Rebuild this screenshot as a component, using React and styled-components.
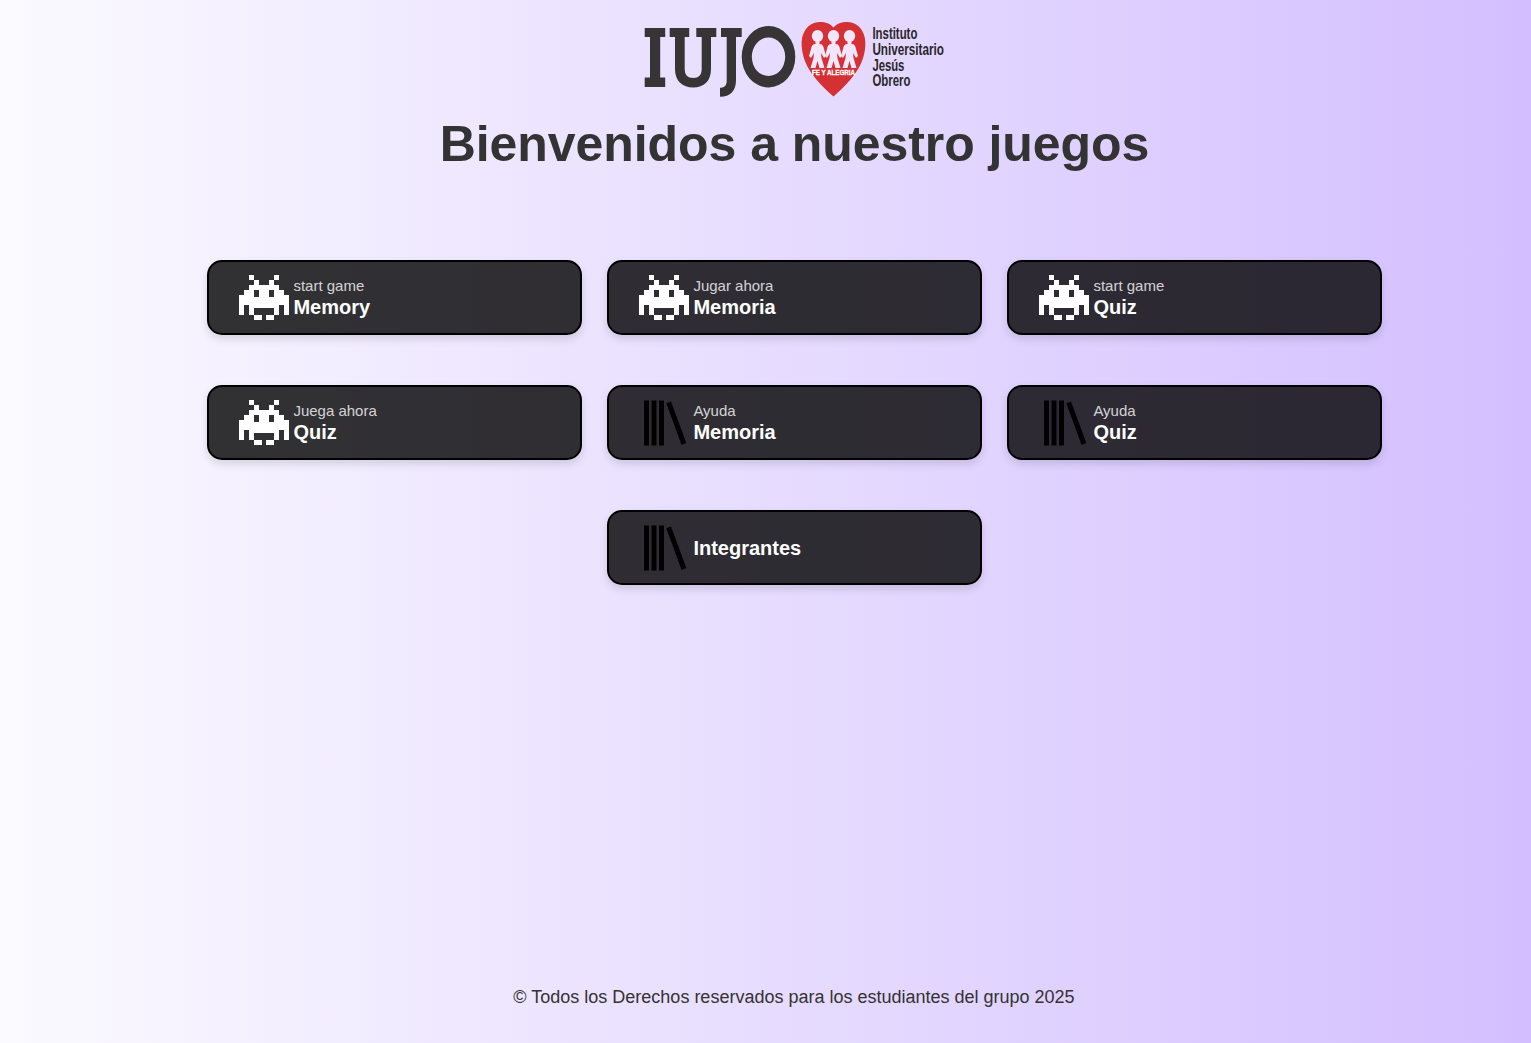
import React from 'react';
import styled, { createGlobalStyle } from 'styled-components';

const GlobalStyle = createGlobalStyle`
  * { box-sizing: border-box; }
  body { margin: 0; font-family: "Liberation Sans", Arial, sans-serif; }
`;

const Page = styled.div`
  min-height: 1043px;
  display: flex;
  flex-direction: column;
  align-items: center;
  padding: 21px 0 35px 58px;
  background: linear-gradient(to right, #fbfaff, #d3bfff);
`;

const Logo = styled.svg`
  display: block;
  width: 305px;
  height: 77px;
  flex: none;
  overflow: visible;
`;

const Title = styled.h1`
  margin: 18px 0 0;
  font-size: 50px;
  line-height: 57px;
  letter-spacing: -0.06px;
  color: #333;
  white-space: nowrap;
`;

const Menu = styled.nav`
  width: 1175px;
  margin-top: 87px;
  display: flex;
  flex-wrap: wrap;
  justify-content: center;
  gap: 50px 25px;
`;

const Card = styled.a`
  width: 375px;
  height: 75px;
  padding-left: 30px;
  display: flex;
  align-items: center;
  gap: 4.4px;
  color: #fff;
  background: rgba(0, 0, 0, 0.8);
  border: 2px solid #000;
  border-radius: 15px;
  box-shadow: 0 4px 8px rgba(0, 0, 0, 0.13);
`;

const Icon = styled.svg`
  width: 50px;
  height: 50px;
  flex: none;
`;

const Label = styled.div`
  display: flex;
  flex-direction: column;
  padding-top: 1px;
`;

const Small = styled.span`
  font-size: 15px;
  line-height: 17px;
  margin: 0 0 2px;
  color: rgba(255, 255, 255, 0.8);
`;

const Name = styled.span`
  font-size: 20px;
  line-height: 23px;
  font-weight: 700;
`;

const Footer = styled.footer`
  margin-top: auto;
  padding-right: 1px;
  font-size: 18px;
  line-height: 21px;
  color: #333;
`;

const Invader = () => (
  <Icon viewBox="0 0 50 50" shapeRendering="crispEdges" fill="#fff">
    <path
      fillRule="evenodd"
      d="M10 12h5v-5h5v5h10v-5h5v5h5v5h5v5h5v20h-5v-10h-5v10h-5v-7h-20v7h-5v-10h-5v10h-5v-20h5v-5h5zM15 17v7h5v-7zM30 17v7h5v-7z"
    />
    <path d="M10 2h5v5h-5zM35 2h5v5h-5zM15 42h8v5h-8zM27 42h8v5h-8z" />
  </Icon>
);

const Books = () => (
  <Icon viewBox="0 0 50 50" fill="#000">
    <path d="M5 2.5h5v45H5zM12.5 2.5h5v45h-5zM20 2.5h5v45h-5zM27.3 5.2l4.7-1.8 15.3 41.7-4.7 1.8z" />
  </Icon>
);

const Child = ({ x }) => (
  <g transform={`translate(${x} 36)`}>
    <ellipse rx="5.7" ry="6" />
    <path d="M-2 5h4v3c3 0 4 2 4.500 5l2 7-2 2-3-5 .5 5 3 10h-5l-2-7-2 7h-5l3-10 .5-5-3 5-2-2 2-7c.5-3 1.500-5 4.500-5z" />
  </g>
);

const Brand = () => (
  <Logo viewBox="642 21 305 77">
    <g fill="#363435">
      <path d="M644.7 28h20.5v9h-5v40.5h5v9.5h-20.500v-9.500h5.300v-40.500h-5.300z" />
      <path d="M669.700 28h19.500v9h-4.500v32c0 6 3 9 8.500 9s8.500-3 8.500-9v-32h-5.400v-9h20v9h-5.300v32c0 12-7 18.500-17.800 18.500s-18.200-6.500-18.200-18.500v-32h-5.300z" />
      <path d="M721 28h20.700v9h-5.700v43c0 11-5.500 16.700-16 16.700v-9c4.500 0 6.700-2.500 6.700-7v-43.700h-5.700z" />
      <path
        fillRule="evenodd"
        d="M768.500 26a26.800 30.700 0 1 1 0 61.400a26.800 30.700 0 1 1 0-61.400zM768.500 37.600a16.700 19.200 0 1 0 0 38.400a16.700 19.200 0 1 0 0-38.400z"
      />
    </g>
    <path
      fill="#d43134"
      d="M833.500 27.500C838 22 847 21 853 23C862 26 866 36 865.300 46C864 66 852 80 833.500 96.500C815 80 803 66 801.700 46C801 36 805 26 814 23C820 21 829 22 833.500 27.500z"
    />
    <g fill="#f1e6fb">
      <Child x={817.5} />
      <Child x={833.5} />
      <Child x={849.5} />
    </g>
    <text
      x="812"
      y="74.8"
      textLength="43"
      lengthAdjust="spacingAndGlyphs"
      fontFamily="Liberation Sans, Arial, sans-serif"
      fontSize="7"
      fontWeight="700"
      fill="#fff"
      stroke="#fff"
      strokeWidth="0.3"
    >
      FE Y ALEGRIA
    </text>
    <g
      fontFamily="Liberation Sans, Arial, sans-serif"
      fontSize="16"
      fontWeight="700"
      fill="#292729"
    >
      <text x="872.4" y="39.4" textLength="45" lengthAdjust="spacingAndGlyphs">Instituto</text>
      <text x="872.4" y="55" textLength="71.5" lengthAdjust="spacingAndGlyphs">Universitario</text>
      <text x="872.4" y="70.7" textLength="32" lengthAdjust="spacingAndGlyphs">Jesús</text>
      <text x="872.4" y="86.3" textLength="38" lengthAdjust="spacingAndGlyphs">Obrero</text>
    </g>
  </Logo>
);

const items = [
  { icon: Invader, small: 'start game', name: 'Memory' },
  { icon: Invader, small: 'Jugar ahora', name: 'Memoria' },
  { icon: Invader, small: 'start game', name: 'Quiz' },
  { icon: Invader, small: 'Juega ahora', name: 'Quiz' },
  { icon: Books, small: 'Ayuda', name: 'Memoria' },
  { icon: Books, small: 'Ayuda', name: 'Quiz' },
  { icon: Books, name: 'Integrantes' },
];

export default function App() {
  return (
    <>
      <GlobalStyle />
      <Page>
        <Brand />
        <Title>Bienvenidos a nuestro juegos</Title>
        <Menu>
          {items.map(({ icon: Glyph, small, name }) => (
            <Card key={`${small}-${name}`}>
              <Glyph />
              <Label>
                {small && <Small>{small}</Small>}
                <Name>{name}</Name>
              </Label>
            </Card>
          ))}
        </Menu>
        <Footer>© Todos los Derechos reservados para los estudiantes del grupo 2025</Footer>
      </Page>
    </>
  );
}
